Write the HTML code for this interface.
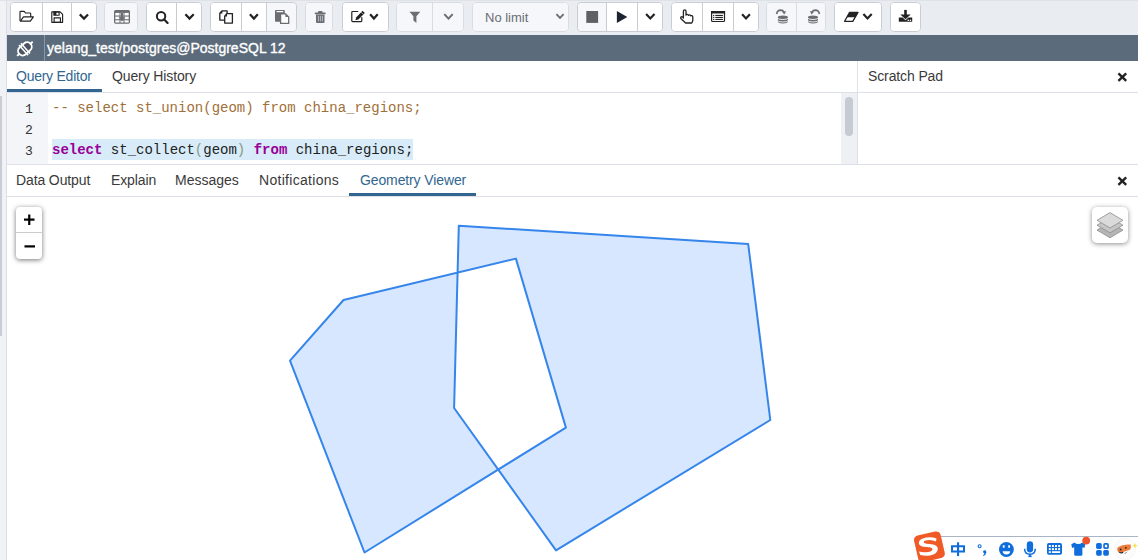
<!DOCTYPE html>
<html><head><meta charset="utf-8">
<style>
*{box-sizing:border-box;margin:0;padding:0}
html,body{width:1138px;height:560px;overflow:hidden;background:#fff;font-family:"Liberation Sans",sans-serif;color:#222}
.abs{position:absolute}
#strip{left:0;top:0;width:7px;height:560px;background:#f0f2f5;border-right:1px solid #dcdee2;border-top:1px solid #dfe2e7}
#thumb{left:0;top:96px;width:2px;height:240px;background:#c8cdd5}
#toolbar{left:7px;top:0;width:1131px;height:35px;background:#e9edf2;border-top:1px solid #dfe2e7}
#connbar{left:7px;top:35px;width:1131px;height:26px;background:#5b6b7b}
#conntxt{left:47px;top:35px;height:26px;line-height:26px;color:#fff;font-size:14px;white-space:nowrap;-webkit-text-stroke:0.35px #fff}
#tabs1{left:7px;top:61px;width:850px;height:32px;background:#fff;border-bottom:1px solid #dde0e6}
.tab{position:absolute;font-size:14px;white-space:nowrap;color:#3a3a3a;letter-spacing:-0.12px}
.tab.act{color:#326690}
.uline{position:absolute;height:3px;background:#326690}
#sp{left:857px;top:61px;width:281px;height:103px;border-left:1px solid #dde0e6}
#sphead{left:858px;top:61px;width:280px;height:32px;border-bottom:1px solid #dde0e6}
#gutter{left:7px;top:93px;width:41px;height:71px;background:#f3f5f8}
.ln{position:absolute;left:25px;font-family:"Liberation Mono",monospace;font-size:13px;color:#333}
.code{position:absolute;left:52px;font-family:"Liberation Mono",monospace;font-size:14px;white-space:pre;color:#222;line-height:21px}
#hl{left:52px;top:139px;width:361px;height:21px;background:#d7ecf8}
#edbot{left:7px;top:164px;width:1131px;height:1px;background:#dde0e6}
#sbtrack{left:841px;top:93px;width:16px;height:71px;background:#eef0f3}
#sbthumb{left:845px;top:97px;width:8px;height:39px;background:#c5cad3;border-radius:4px}
#tabs2{left:7px;top:165px;width:1131px;height:32px;border-bottom:1px solid #dde0e6}
#map{left:7px;top:197px;width:1131px;height:363px;background:#fff}
#zoomctl{left:16px;top:207px;width:26px;height:52px;background:#fff;border-radius:4px;box-shadow:0 1px 5px rgba(0,0,0,0.55)}
#layers{left:1092px;top:207px;width:36px;height:36px;background:#fff;border-radius:5px;box-shadow:0 1px 5px rgba(0,0,0,0.45)}
#nolimit{left:485px;top:10px;font-size:13px;color:#6a6e75;white-space:nowrap}
</style></head><body>
<div id="strip" class="abs"></div>
<div id="thumb" class="abs"></div>
<div id="toolbar" class="abs"></div>
<svg class="abs" style="left:0;top:0" width="1138" height="35">
<clipPath id="g0"><rect x="10" y="2" width="87" height="30" rx="3.5"/></clipPath>
<g clip-path="url(#g0)"><rect x="10" y="2" width="87" height="30" fill="#fff"/>
</g>
<rect x="10.5" y="2.5" width="86" height="29" rx="3" fill="none" stroke="#c9cdd3"/>
<rect x="42" y="2" width="1" height="30" fill="#c9cdd3"/>
<rect x="71" y="2" width="1" height="30" fill="#c9cdd3"/>
<clipPath id="g1"><rect x="104" y="2" width="34" height="30" rx="3.5"/></clipPath>
<g clip-path="url(#g1)"><rect x="104" y="2" width="34" height="30" fill="#fff"/>
<rect x="104" y="2" width="34" height="30" fill="#f5f7fa"/>
</g>
<rect x="104.5" y="2.5" width="33" height="29" rx="3" fill="none" stroke="#d9dce2"/>
<clipPath id="g2"><rect x="146" y="2" width="56" height="30" rx="3.5"/></clipPath>
<g clip-path="url(#g2)"><rect x="146" y="2" width="56" height="30" fill="#fff"/>
</g>
<rect x="146.5" y="2.5" width="55" height="29" rx="3" fill="none" stroke="#c9cdd3"/>
<rect x="176" y="2" width="1" height="30" fill="#c9cdd3"/>
<clipPath id="g3"><rect x="210" y="2" width="87" height="30" rx="3.5"/></clipPath>
<g clip-path="url(#g3)"><rect x="210" y="2" width="87" height="30" fill="#fff"/>
<rect x="266" y="2" width="31" height="30" fill="#f5f7fa"/>
</g>
<rect x="210.5" y="2.5" width="86" height="29" rx="3" fill="none" stroke="#c9cdd3"/>
<rect x="241" y="2" width="1" height="30" fill="#c9cdd3"/>
<rect x="266" y="2" width="1" height="30" fill="#c9cdd3"/>
<clipPath id="g4"><rect x="305" y="2" width="28" height="30" rx="3.5"/></clipPath>
<g clip-path="url(#g4)"><rect x="305" y="2" width="28" height="30" fill="#fff"/>
<rect x="305" y="2" width="28" height="30" fill="#f5f7fa"/>
</g>
<rect x="305.5" y="2.5" width="27" height="29" rx="3" fill="none" stroke="#d9dce2"/>
<clipPath id="g5"><rect x="342" y="2" width="47" height="30" rx="3.5"/></clipPath>
<g clip-path="url(#g5)"><rect x="342" y="2" width="47" height="30" fill="#fff"/>
</g>
<rect x="342.5" y="2.5" width="46" height="29" rx="3" fill="none" stroke="#c9cdd3"/>
<clipPath id="g6"><rect x="396" y="2" width="68" height="30" rx="3.5"/></clipPath>
<g clip-path="url(#g6)"><rect x="396" y="2" width="68" height="30" fill="#fff"/>
<rect x="396" y="2" width="68" height="30" fill="#f5f7fa"/>
</g>
<rect x="396.5" y="2.5" width="67" height="29" rx="3" fill="none" stroke="#d9dce2"/>
<rect x="432" y="2" width="1" height="30" fill="#d9dce2"/>
<clipPath id="g7"><rect x="472" y="2" width="97" height="30" rx="3.5"/></clipPath>
<g clip-path="url(#g7)"><rect x="472" y="2" width="97" height="30" fill="#fff"/>
<rect x="472" y="2" width="97" height="30" fill="#f5f7fa"/>
</g>
<rect x="472.5" y="2.5" width="96" height="29" rx="3" fill="none" stroke="#d9dce2"/>
<clipPath id="g8"><rect x="577" y="2" width="86" height="30" rx="3.5"/></clipPath>
<g clip-path="url(#g8)"><rect x="577" y="2" width="86" height="30" fill="#fff"/>
<rect x="577" y="2" width="29" height="30" fill="#f5f7fa"/>
</g>
<rect x="577.5" y="2.5" width="85" height="29" rx="3" fill="none" stroke="#c9cdd3"/>
<rect x="606" y="2" width="1" height="30" fill="#c9cdd3"/>
<rect x="637" y="2" width="1" height="30" fill="#c9cdd3"/>
<clipPath id="g9"><rect x="671" y="2" width="88" height="30" rx="3.5"/></clipPath>
<g clip-path="url(#g9)"><rect x="671" y="2" width="88" height="30" fill="#fff"/>
</g>
<rect x="671.5" y="2.5" width="87" height="29" rx="3" fill="none" stroke="#c9cdd3"/>
<rect x="702" y="2" width="1" height="30" fill="#c9cdd3"/>
<rect x="733" y="2" width="1" height="30" fill="#c9cdd3"/>
<clipPath id="g10"><rect x="766" y="2" width="60" height="30" rx="3.5"/></clipPath>
<g clip-path="url(#g10)"><rect x="766" y="2" width="60" height="30" fill="#fff"/>
<rect x="766" y="2" width="60" height="30" fill="#f5f7fa"/>
</g>
<rect x="766.5" y="2.5" width="59" height="29" rx="3" fill="none" stroke="#d9dce2"/>
<rect x="796" y="2" width="1" height="30" fill="#d9dce2"/>
<clipPath id="g11"><rect x="834" y="2" width="48" height="30" rx="3.5"/></clipPath>
<g clip-path="url(#g11)"><rect x="834" y="2" width="48" height="30" fill="#fff"/>
</g>
<rect x="834.5" y="2.5" width="47" height="29" rx="3" fill="none" stroke="#c9cdd3"/>
<clipPath id="g12"><rect x="890" y="2" width="31" height="30" rx="3.5"/></clipPath>
<g clip-path="url(#g12)"><rect x="890" y="2" width="31" height="30" fill="#fff"/>
</g>
<rect x="890.5" y="2.5" width="30" height="29" rx="3" fill="none" stroke="#c9cdd3"/>
<g fill="none" stroke="#222" stroke-width="1.15" stroke-linejoin="round" stroke-linecap="round">
<path d="M20,20.6 V12.1 Q20,11.4 20.7,11.4 H24.2 L25.5,13 H29.9 Q30.7,13 30.7,13.8 V16.4"/>
<path d="M20.4,21.1 L23.5,16.8 H33.4 L30.3,21.1 Z"/>
<path d="M51.8,11.8 H60.1 L62.6,14.3 V22.3 H51.8 Z"/>
<rect x="53.9" y="11.8" width="5.2" height="3.4"/>
<rect x="54.1" y="17.8" width="6.3" height="4.5"/>
</g>
<rect x="53.9" y="11.8" width="2.5" height="3.4" fill="#222"/>
<g fill="none" stroke="#222" stroke-width="2.2">
<polyline points="79.8,14.4 84,18.6 88,14.4"/>
<polyline points="185.4,14.3 189.5,18.6 193.7,14.3"/>
<polyline points="249.9,14.3 253.9,18.6 257.8,14.3"/>
<polyline points="370.1,14.3 373.9,18.6 377.7,14.3"/>
<polyline points="646.1,14 650.3,18.5 654.5,14"/>
<polyline points="742.1,14.3 746,18.5 749.9,14.3"/>
<polyline points="863.4,14.1 867.5,18.5 871.7,14.1"/>
</g>
<g>
<rect x="114" y="10" width="16" height="13.7" rx="1.6" fill="#6a6d72"/>
<g fill="#fff">
<rect x="115.3" y="12.9" width="4.2" height="2.6"/><rect x="120.5" y="12.9" width="3" height="2.6"/><rect x="124.5" y="12.9" width="4.2" height="2.6"/>
<rect x="115.3" y="16.6" width="4.2" height="2.6"/><rect x="120.5" y="16.6" width="3" height="2.6"/><rect x="124.5" y="16.6" width="4.2" height="2.6"/>
<rect x="115.3" y="20.3" width="4.2" height="2.2"/><rect x="120.5" y="20.3" width="3" height="2.2"/><rect x="124.5" y="20.3" width="4.2" height="2.2"/>
</g>
<rect x="121" y="13" width="2" height="5" fill="#6a6d72"/>
<polygon points="118.6,17.3 125.4,17.3 122,21.5" fill="#6a6d72"/>
</g>
<circle cx="161.1" cy="16.3" r="4.2" fill="none" stroke="#222" stroke-width="2"/>
<line x1="164.2" y1="19.4" x2="167.6" y2="22.9" stroke="#222" stroke-width="2.2" stroke-linecap="round"/>
<g stroke="#222" stroke-width="1.3" stroke-linejoin="round" fill="#fff">
<path d="M222.2,10.8 H227.1 V20.1 H219.8 V13.2 Z"/>
<path d="M226.8,13.6 H232.4 V23.1 H224.7 V16.2 Z"/>
</g>
<path d="M219.6,13.4 L222.4,10.6 V13.4 Z" fill="#222"/>
<path d="M224.5,16.4 L227,13.4 V16.4 Z" fill="#222"/>
<g fill="#6a6d72">
<rect x="275" y="10" width="9.8" height="11.8" rx="0.8"/>
<rect x="276.6" y="11" width="6.6" height="1.2" fill="#fff"/>
<path d="M280.6,13.9 H285.6 L288.7,17 V23.3 H280.6 Z" fill="#fff" stroke="#6a6d72" stroke-width="1.3"/>
<path d="M285.4,13.9 V17.1 H288.7 Z"/>
<rect x="314.8" y="12.5" width="10.8" height="1.7" rx="0.5"/>
<rect x="318.1" y="10.9" width="4.4" height="2.2" rx="0.6"/>
<path d="M316,14.6 H324.5 V22 Q324.5,23 323.5,23 H317 Q316,23 316,22 Z"/>
<rect x="317.9" y="15.8" width="1" height="5.6" fill="#b5bcc6"/>
<rect x="319.9" y="15.8" width="1" height="5.6" fill="#b5bcc6"/>
<rect x="321.9" y="15.8" width="1" height="5.6" fill="#b5bcc6"/>
</g>
<path d="M357.8,11.5 H352.6 Q351.8,11.5 351.8,12.3 V20.8 Q351.8,21.6 352.6,21.6 H361 Q361.8,21.6 361.8,20.8 V17.6" fill="none" stroke="#222" stroke-width="1.2" stroke-linecap="round"/>
<path d="M362.6,10.8 L364.8,13 L358.4,19.4 L355.4,20.3 L356.3,17.2 Z" fill="#222"/>
<path d="M361.3,12.2 L363.4,14.3" stroke="#fff" stroke-width="0.6"/>
<g fill="#6a6d72">
<polygon points="409.5,11.8 420.3,11.8 416.4,16.3 416.4,22.9 413.4,20.4 413.4,16.3"/>
</g>
<polyline points="444.3,14.1 448.5,18.6 452.7,14.1" fill="none" stroke="#6a6d72" stroke-width="2"/>
<polyline points="556.4,14.2 560,17.8 563.6,14.2" fill="none" stroke="#6a6e75" stroke-width="1.9"/>
<rect x="586.3" y="11" width="11.8" height="11.9" fill="#5f6063"/>
<polygon points="616.9,11 627.3,16.95 616.9,22.9" fill="#1d2330"/>
<path d="M683.4,18 V11.2 Q683.4,9.9 684.7,9.9 Q686,9.9 686,11.2 V15.2 Q686.2,14.3 687.2,14.3 Q688.3,14.3 688.5,15.4 Q688.8,14.8 689.7,14.8 Q690.7,14.8 690.8,15.9 Q691.2,15.4 691.9,15.6 Q692.8,15.9 692.8,17 V20 Q692.8,21.4 692.1,22.4 L691.6,23 H685.6 L681.1,18.7 Q680.2,17.8 680.9,17.1 Q681.7,16.4 682.6,17.1 Z" fill="#fff" stroke="#222" stroke-width="1.3" stroke-linejoin="round"/>
<rect x="711.6" y="11.6" width="12.9" height="9.9" rx="1" fill="#fff" stroke="#222" stroke-width="1.2"/>
<rect x="711" y="11" width="14.1" height="2.5" fill="#222"/>
<g fill="#222"><rect x="713.1" y="14.9" width="1.2" height="1.2"/><rect x="713.1" y="16.9" width="1.2" height="1.2"/><rect x="713.1" y="18.9" width="1.2" height="1.2"/></g>
<g fill="#222"><rect x="715.3" y="14.9" width="7.6" height="1.1"/><rect x="715.3" y="16.9" width="7.6" height="1.1"/><rect x="715.3" y="18.9" width="7.6" height="1.1"/></g>
<g fill="#6a6d72">
<rect x="777.9" y="15.4" width="10" height="8" rx="5" ry="1.9"/>
<rect x="808" y="15.4" width="10" height="8" rx="5" ry="1.9"/>
</g>
<g fill="none" stroke="#f5f7fa" stroke-width="0.9">
<path d="M777.6,17.9 A5.3,1.6 0 0 0 788.2,17.9"/><path d="M777.6,20.4 A5.3,1.6 0 0 0 788.2,20.4"/>
<path d="M807.7,17.9 A5.3,1.6 0 0 0 818.3,17.9"/><path d="M807.7,20.4 A5.3,1.6 0 0 0 818.3,20.4"/>
</g>
<path d="M776.6,14 Q777.2,10.2 780.6,10.1 Q783,10.1 783.9,12" fill="none" stroke="#6a6d72" stroke-width="1.7"/>
<polygon points="781.8,11.6 786.2,11.2 784.3,14.6" fill="#6a6d72"/>
<path d="M819.4,14 Q818.8,10.2 815.4,10.1 Q813,10.1 812.1,12" fill="none" stroke="#6a6d72" stroke-width="1.7"/>
<polygon points="814.2,11.6 809.8,11.2 811.7,14.6" fill="#6a6d72"/>
<polygon points="849.6,12.4 858,12.4 855.3,17.2 846.9,17.2" fill="#222"/>
<polygon points="849.6,12.4 858,12.4 852.8,21.3 844.6,21.3" fill="none" stroke="#222" stroke-width="1.3" stroke-linejoin="round"/>
<rect x="904.2" y="9.9" width="2.6" height="5.5" fill="#222"/>
<polygon points="900.3,14.6 910.7,14.6 905.5,19.3" fill="#222"/>
<path d="M898.8,17.6 H902.6 L905.5,20.3 L908.4,17.6 H912.2 V21.8 H898.8 Z" fill="#222"/>
<rect x="907.6" y="19.7" width="1.3" height="1.3" fill="#fff"/><rect x="909.8" y="19.7" width="1.3" height="1.3" fill="#fff"/>
</svg>
<div id="nolimit" class="abs">No limit</div>

<div id="connbar" class="abs"></div>
<div class="abs" style="left:44px;top:35px;width:1px;height:26px;background:#8a98a6"></div>
<div id="conntxt" class="abs">yelang_test/postgres@PostgreSQL 12</div>
<svg class="abs" style="left:0;top:35px" width="44" height="26">
<g transform="translate(24.9,13.85) rotate(-42)">
<line x1="-10.5" y1="0" x2="10.5" y2="0" stroke="#fff" stroke-width="1.9"/>
<rect x="-7.6" y="-4.6" width="15.2" height="9.2" rx="4.6" fill="#4b5460" stroke="#fff" stroke-width="1.9"/>
<rect x="-2.6" y="-6.8" width="1.5" height="13.6" fill="#fff"/>
<rect x="0" y="-6.8" width="1.5" height="13.6" fill="#fff"/>
</g>
</svg>

<div id="tabs1" class="abs"></div>
<div class="tab act" style="left:16px;top:68px;letter-spacing:-0.25px">Query Editor</div>
<div class="tab" style="left:112px;top:68px">Query History</div>
<div class="uline" style="left:7px;top:89px;width:95px"></div>
<div id="sp" class="abs"></div>
<div id="sphead" class="abs"></div>
<div class="tab" style="left:868px;top:68px">Scratch Pad</div>
<svg class="abs" style="left:1112px;top:66px" width="20" height="20"><g stroke="#222" stroke-width="2.4"><line x1="6.4" y1="7.4" x2="14.2" y2="14.9"/><line x1="14.2" y1="7.4" x2="6.4" y2="14.9"/></g></svg>

<div id="gutter" class="abs"></div>
<div id="hl" class="abs"></div>
<div class="ln" style="top:102px">1</div>
<div class="ln" style="top:123px">2</div>
<div class="ln" style="top:144px">3</div>
<div class="code" style="top:98px;color:#a0703a">-- select st_union(geom) from china_regions;</div>
<div class="code" style="top:140px"><b style="color:#909">select</b> st_collect<span style="color:#8a9a8a">(</span>geom<span style="color:#8a9a8a">)</span> <b style="color:#909">from</b> china_regions;</div>
<div id="sbtrack" class="abs"></div>
<div id="sbthumb" class="abs"></div>
<div id="edbot" class="abs"></div>

<div id="tabs2" class="abs"></div>
<div class="tab" style="left:16px;top:172px">Data Output</div>
<div class="tab" style="left:111px;top:172px">Explain</div>
<div class="tab" style="left:175px;top:172px;letter-spacing:0">Messages</div>
<div class="tab" style="left:259px;top:172px;letter-spacing:0.3px">Notifications</div>
<div class="tab act" style="left:360px;top:172px">Geometry Viewer</div>
<div class="uline" style="left:349px;top:193px;width:127px"></div>
<svg class="abs" style="left:1112px;top:170px" width="20" height="20"><g stroke="#222" stroke-width="2.4"><line x1="6.4" y1="7.4" x2="14.2" y2="14.9"/><line x1="14.2" y1="7.4" x2="6.4" y2="14.9"/></g></svg>

<div id="map" class="abs"></div>
<svg class="abs" style="left:0;top:0" width="1138" height="560">
<path fill-rule="evenodd" fill="#3388ff" fill-opacity="0.2" stroke="#3585ea" stroke-width="2" stroke-linejoin="round"
 d="M343.5,300 L290,360.7 L364.5,552.5 L565.9,427.6 L515.9,258.6 Z M458.8,225.7 L748.2,244.1 L770.3,420 L556,550.3 L454.1,408 Z"/>
</svg>
<div id="zoomctl" class="abs"><div style="position:absolute;left:0;top:25px;width:26px;height:1px;background:#ccc"></div></div>
<svg class="abs" style="left:16px;top:207px" width="26" height="52">
<rect x="8" y="11.5" width="10.5" height="2.2" fill="#000"/><rect x="12.15" y="7.5" width="2.2" height="10.5" fill="#000"/>
<rect x="8.5" y="38.3" width="10.5" height="2.2" fill="#000"/>
</svg>
<div id="layers" class="abs"></div>
<svg class="abs" style="left:1092px;top:207px" width="36" height="36">
<g stroke="#8d8d8d" stroke-width="0.8" stroke-linejoin="round">
<polygon points="5,23.1 18,15.4 31,23.1 18,30.8" fill="#b5b5b5"/>
<polygon points="5,18.2 18,10.5 31,18.2 18,25.9" fill="#c6c6c6"/>
<polygon points="5,13.3 18,5.6 31,13.3 18,21" fill="#dadada"/>
</g>
</svg>
<div class="abs" style="left:939px;top:536px;width:199px;height:24px;background:#fff;border-top:1px solid #a9b5c5"></div>
<svg class="abs" style="left:900px;top:525px" width="238" height="35">
<g transform="translate(-900,-525)">
<rect x="915.8" y="533.2" width="27.2" height="27.2" rx="4.5" fill="#f05a26" transform="rotate(-13 929.4 546.8)"/>
<path d="M936.5,538.6 Q932,536.6 926,537.6 Q918.5,539 918.8,543.3 Q919.2,547 926.5,547 Q933,547 932.5,549.5 Q932,552 925.5,552.3 Q922,552.5 919,551.5 L920.3,555 Q925,556.3 930,555.5 Q937.5,554 937.8,549.3 Q938,544.3 929.5,544 Q923.2,543.8 923.8,541.8 Q924.5,540 929.5,540 Q933,540 936,541.6 Z" fill="#fff"/>
<g fill="#0f6edb">
<path d="M951,545.3 H965 V552.5 H951 Z M953,547.2 V550.6 H963 V547.2 Z" fill-rule="evenodd"/>
<rect x="957" y="542.3" width="2.1" height="13.8"/>
</g>
<circle cx="979.6" cy="546.3" r="1.5" fill="none" stroke="#0f6edb" stroke-width="1.1"/>
<path d="M984.6,550.2 Q986.6,550.2 986.4,552.5 Q986,555 983.3,556 L983,555.2 Q984.4,554.4 984.4,553.3 Q982.9,553 983.1,551.6 Q983.4,550.2 984.6,550.2 Z" fill="#0f6edb"/>
<circle cx="1006.4" cy="549.5" r="7.4" fill="#0f6edb"/>
<rect x="1002.8" y="545.3" width="1.8" height="2.4" fill="#fff"/><rect x="1008.2" y="545.3" width="1.8" height="2.4" fill="#fff"/>
<path d="M1002.6,551.2 H1010.2 Q1009.8,554.4 1006.4,554.4 Q1003,554.4 1002.6,551.2 Z" fill="#fff"/>
<rect x="1026.8" y="541.2" width="6.3" height="11.2" rx="3.15" fill="#0f6edb"/>
<path d="M1024.6,548.8 Q1024.6,554.3 1030,554.3 Q1035.3,554.3 1035.3,548.8" fill="none" stroke="#0f6edb" stroke-width="1.5"/>
<rect x="1029.2" y="554" width="1.6" height="2" fill="#0f6edb"/>
<rect x="1028.3" y="555.6" width="3.4" height="1.5" fill="#0f6edb"/>
<rect x="1047" y="543.1" width="15" height="11.7" rx="1.8" fill="#0f6edb"/>
<g fill="#fff">
<rect x="1048.8" y="545" width="2" height="2"/><rect x="1051.9" y="545" width="2" height="2"/><rect x="1055" y="545" width="2" height="2"/><rect x="1058.1" y="545" width="2" height="2"/>
<rect x="1048.8" y="548.1" width="2" height="2"/><rect x="1051.9" y="548.1" width="2" height="2"/><rect x="1055" y="548.1" width="2" height="2"/><rect x="1058.1" y="548.1" width="2" height="2"/>
<rect x="1048.8" y="551.2" width="2" height="1.8"/><rect x="1051.9" y="551.2" width="8.2" height="1.8"/>
</g>
<path d="M1074.3,542.4 L1071.2,544.6 L1072.2,548 L1074.2,547.3 V554.5 Q1074.2,555.7 1075.4,555.7 H1081.2 Q1082.4,555.7 1082.4,554.5 V547.3 L1084.4,548 L1085.4,544.6 L1082.3,542.4 Q1078.3,545.5 1074.3,542.4 Z" fill="#0f6edb"/>
<circle cx="1086.2" cy="540.6" r="3.9" fill="#f0532b"/>
<g fill="#0f6edb">
<rect x="1096.1" y="543.1" width="5.7" height="5.8" rx="1.6"/>
<rect x="1096.1" y="549.9" width="5.7" height="5.8" rx="1.6"/>
<rect x="1103.2" y="549.9" width="5.7" height="5.8" rx="1.6"/>
<path d="M1104.8,543.1 H1107.3 Q1108.9,543.1 1108.9,544.7 V547.3 Q1108.9,548.9 1107.3,548.9 H1104.8 Q1103.2,548.9 1103.2,547.3 V544.7 Q1103.2,543.1 1104.8,543.1 Z M1104.9,544.8 V547.2 H1107.2 V544.8 Z" fill-rule="evenodd"/>
</g>
<circle cx="1125" cy="549" r="10.5" fill="#fcfcfc" stroke="#f2f2f2" stroke-width="0.8"/>
<path d="M1117.6,547.6 Q1123,544 1130.6,544.6 Q1131.6,547.6 1130.2,549.6 Q1124,552.4 1118.8,552.6 Q1116.4,550.4 1117.6,547.6 Z" fill="#ee7a3a"/>
<circle cx="1120.6" cy="549.6" r="1" fill="#222"/><circle cx="1125.8" cy="547.8" r="0.9" fill="#222"/>
<path d="M1119.2,551.8 Q1121,553.6 1123.2,552.3" fill="none" stroke="#222" stroke-width="1.1"/>
<line x1="1124.8" y1="553.8" x2="1126.8" y2="551.8" stroke="#555" stroke-width="0.8"/>
<polygon points="1135,542.8 1136,545 1138,545.6 1136,546.4 1135,548.5 1134,546.4 1132.2,545.6 1134,545" fill="#f6e35a"/>
</g>
</svg>
</body></html>
